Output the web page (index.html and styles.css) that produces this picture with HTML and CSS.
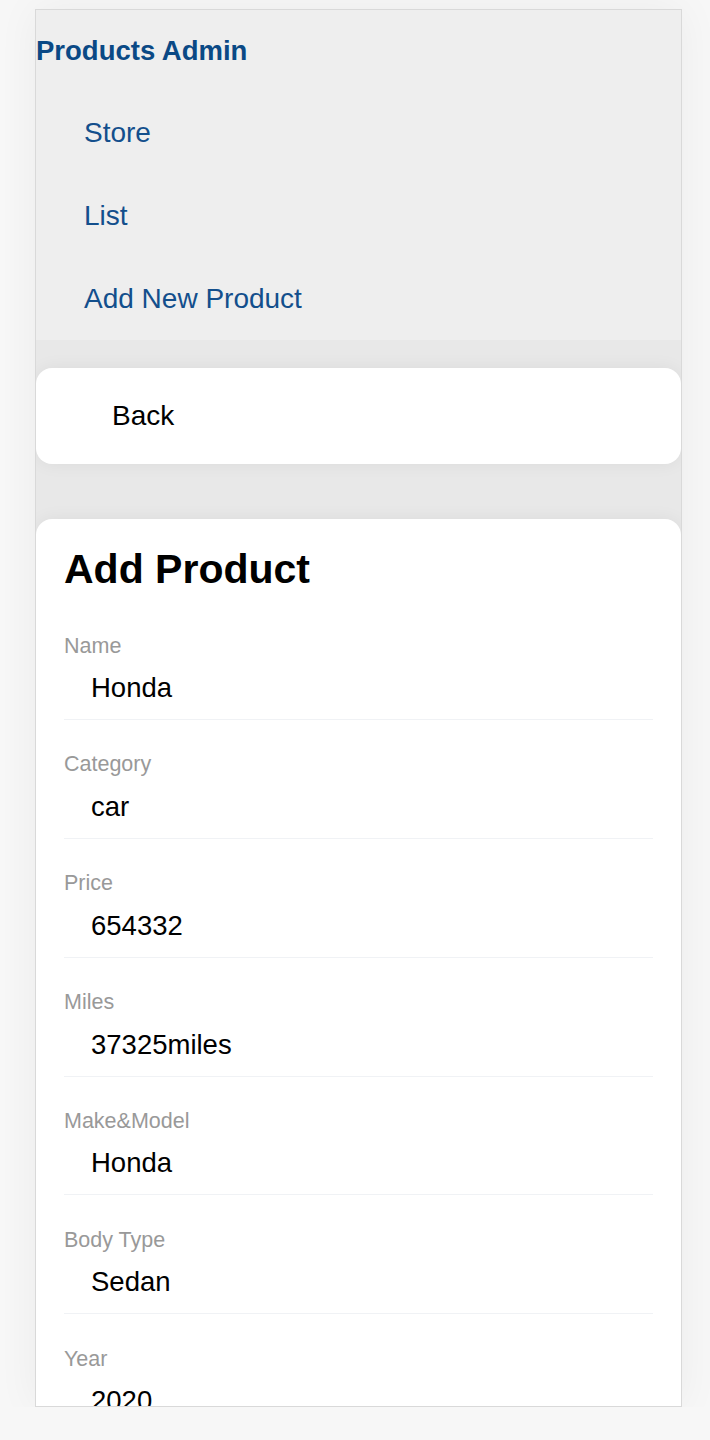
FILE: index.html
```html
<!DOCTYPE html>
<html lang="en">
<head>
<meta charset="utf-8">
<title>Products Admin</title>
<link rel="stylesheet" href="styles.css">
</head>
<body>
<div class="frame">
  <header class="header">
    <div class="brand">Products Admin</div>
    <nav class="nav">
      <a class="nav-link" href="#">Store</a>
      <a class="nav-link" href="#">List</a>
      <a class="nav-link" href="#">Add New Product</a>
    </nav>
  </header>
  <main class="content">
    <div class="card back-card">
      <a class="back-link" href="#">Back</a>
    </div>
    <div class="card form-card">
      <h1 class="form-title">Add Product</h1>
      <div class="field">
        <div class="field-label">Name</div>
        <div class="field-value">Honda</div>
      </div>
      <div class="field">
        <div class="field-label">Category</div>
        <div class="field-value">car</div>
      </div>
      <div class="field">
        <div class="field-label">Price</div>
        <div class="field-value">654332</div>
      </div>
      <div class="field">
        <div class="field-label">Miles</div>
        <div class="field-value">37325miles</div>
      </div>
      <div class="field">
        <div class="field-label">Make&amp;Model</div>
        <div class="field-value">Honda</div>
      </div>
      <div class="field">
        <div class="field-label">Body Type</div>
        <div class="field-value">Sedan</div>
      </div>
      <div class="field">
        <div class="field-label">Year</div>
        <div class="field-value">2020</div>
      </div>
    </div>
  </main>
</div>
</body>
</html>
```

FILE: styles.css
```css
html, body {
  margin: 0;
  padding: 0;
}

body {
  background: #f7f7f7;
  font-family: "Liberation Sans", Arial, Helvetica, sans-serif;
  padding-top: 9px;
}

.frame {
  box-sizing: border-box;
  width: 647px;
  height: 1398px;
  margin-left: 35px;
  border: 1px solid #d9d9d9;
  overflow: hidden;
  background: #e8e8e8;
  box-shadow: 0 0 40px rgba(0, 0, 0, 0.05);
}

.header {
  background: #eeeeee;
  height: 330px;
  padding-top: 21px;
  box-sizing: border-box;
}

.brand {
  font-size: 27.5px;
  font-weight: bold;
  line-height: 40px;
  color: #0a4985;
  margin-bottom: 20px;
}

.nav {
  display: flex;
  flex-direction: column;
}

.nav-link {
  display: block;
  height: 83px;
  line-height: 83px;
  padding-left: 48px;
  font-size: 28px;
  color: #134f8c;
  text-decoration: none;
}

.content {
  padding-top: 28px;
  display: flex;
  flex-direction: column;
  gap: 55px;
}

.card {
  background: #ffffff;
  border-radius: 16px;
  box-shadow: 0 0 18px rgba(0, 0, 0, 0.06);
}

.back-card {
  height: 96px;
  display: flex;
  align-items: center;
  padding-left: 76px;
}

.back-link {
  font-size: 28px;
  line-height: 34px;
  color: #000000;
  text-decoration: none;
}

.form-card {
  padding: 26px 28px 40px;
}

.form-title {
  margin: 0 0 8px;
  font-size: 41px;
  line-height: 48px;
  font-weight: bold;
  color: #000000;
}

.field {
  padding-top: 31.5px;
  padding-bottom: 14px;
  border-bottom: 1px solid #f0f2f5;
}

.field-label {
  font-size: 21.5px;
  line-height: 26px;
  color: #999999;
}

.field-value {
  margin-top: 12.4px;
  padding-left: 27px;
  font-size: 27.5px;
  line-height: 34px;
  color: #000000;
}
```
